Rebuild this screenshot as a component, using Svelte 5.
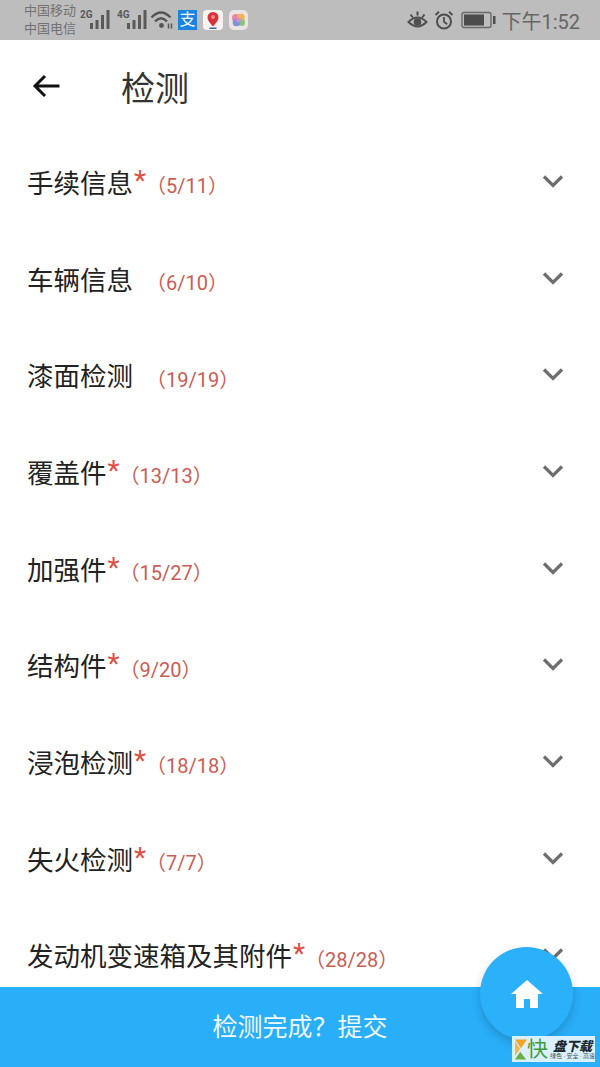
<script>
  const rows = [
    { name: "手续信息", star: true, count: "5/11" },
    { name: "车辆信息", star: false, count: "6/10" },
    { name: "漆面检测", star: false, count: "19/19" },
    { name: "覆盖件", star: true, count: "13/13" },
    { name: "加强件", star: true, count: "15/27" },
    { name: "结构件", star: true, count: "9/20" },
    { name: "浸泡检测", star: true, count: "18/18" },
    { name: "失火检测", star: true, count: "7/7" },
    { name: "发动机变速箱及其附件", star: true, count: "28/28" }
  ];
</script>

{#snippet bars()}
  <svg width="22" height="24" viewBox="0 0 22 24">
    <g fill="#5a5a5a">
      <rect x="1" y="15" width="3" height="6" />
      <rect x="6.500" y="12" width="3" height="9" />
      <rect x="12" y="7" width="3" height="14" />
      <rect x="17.500" y="2" width="3" height="19" />
    </g>
  </svg>
{/snippet}

<div class="page">
  <div class="status">
    <div class="carriers">
      <span>中国移动</span>
      <span>中国电信</span>
    </div>
    <div class="signal">
      <b>2G</b>
      {@render bars()}
    </div>
    <div class="signal second">
      <b>4G</b>
      {@render bars()}
    </div>
    <svg class="wifi" width="24" height="20" viewBox="0 0 24 20">
      <g fill="none" stroke="#555" stroke-width="2.300">
        <path d="M1.500 7.500 Q11 -2.500 20.500 7.500" />
        <path d="M5 11.500 Q11 5 17 11.500" />
      </g>
      <circle cx="11.500" cy="15.500" r="2.400" fill="#555" />
      <path d="M18.500 13.500v5M21.500 13.500v5" stroke="#555" stroke-width="1.500" />
    </svg>
    <div class="app alipay">支</div>
    <svg class="app-svg" width="20" height="20" viewBox="0 0 20 20">
      <rect width="20" height="20" rx="4" fill="#f6f3f0" />
      <path d="M10 2a5.500 5.500 0 0 0-5.500 5.500c0 3.500 5.500 9 5.500 9s5.500-5.500 5.500-9A5.500 5.500 0 0 0 10 2z" fill="#d8333c" />
      <circle cx="10" cy="7" r="2" fill="#eb8c80" />
      <rect x="6.500" y="17.500" width="7" height="1.500" fill="#37699c" />
    </svg>
    <svg class="app-svg pink" width="19" height="20" viewBox="0 0 19 20">
      <rect width="19" height="20" rx="5" fill="#ece3e3" />
      <circle cx="7" cy="8" r="4" fill="#e884a8" />
      <circle cx="12" cy="7.500" r="3.800" fill="#eeb458" />
      <circle cx="12.500" cy="12.500" r="3.500" fill="#8cc67c" />
      <circle cx="7.500" cy="12.500" r="3.800" fill="#7f93dc" />
      <circle cx="9.500" cy="10" r="2.400" fill="#d98fc0" />
    </svg>
    <div class="grow"></div>
    <svg width="21" height="20" viewBox="0 0 21 20">
      <g fill="none" stroke="#4e4e4e" stroke-width="2">
        <path d="M1.500 12 Q10.500 3 19.500 12 Q10.500 21 1.500 12z" />
        <path d="M3.500 4.500l2.400 3M10.500 1.500v4M17.500 4.500l-2.400 3" />
      </g>
      <circle cx="10.500" cy="12" r="3.800" fill="#4e4e4e" />
    </svg>
    <svg class="alarm" width="20" height="20" viewBox="0 0 20 20">
      <circle cx="10" cy="11.500" r="7" fill="none" stroke="#4e4e4e" stroke-width="2" />
      <path d="M10 7v4.700l3.200 2.600" fill="none" stroke="#4e4e4e" stroke-width="1.800" />
      <path d="M1.500 5 L5 1.800M18.500 5 L15 1.800" stroke="#4e4e4e" stroke-width="2" />
    </svg>
    <svg class="battery" width="35" height="18" viewBox="0 0 35 18">
      <rect x="1" y="1.500" width="29" height="15" rx="2" fill="none" stroke="#6a6a6a" stroke-width="1.400" />
      <rect x="3" y="3.500" width="20" height="11" fill="#4c4c4c" />
      <rect x="32" y="5" width="2.500" height="8" fill="#4c4c4c" />
    </svg>
    <span class="time">下午1:52</span>
  </div>

  <header class="bar">
    <svg class="back" width="30" height="26" viewBox="0 0 30 26">
      <path d="M28.500 13H5M14 3L4 13l10 10" fill="none" stroke="#111" stroke-width="3" />
    </svg>
    <h1>检测</h1>
  </header>

  <ul class="list">
    {#each rows as row}
      <li class="row">
        <span class="name">{row.name}</span><span class="star" class:hidden={!row.star}>*</span>
        <span class="count">（{row.count}）</span>
        <svg class="chevron" width="22" height="14" viewBox="0 0 22 14">
          <path d="M2 2.500l9 9 9-9" fill="none" stroke="#6e6e6e" stroke-width="3.200" />
        </svg>
      </li>
    {/each}
  </ul>

  <footer class="submit">检测完成？提交</footer>

  <button class="fab" aria-label="home">
    <svg width="34" height="30" viewBox="0 0 34 30">
      <path d="M17 1L1 15h5v14h8v-9h6v9h8V15h5z" fill="#fff" />
    </svg>
  </button>

  <div class="mark">
    <svg width="15" height="23" viewBox="0 0 15 23">
      <path d="M0 0h14L7 10 0 0z" fill="#f2a427" />
      <path d="M0 2l6 9-6 8z" fill="#f2b84a" />
      <path d="M0 23l6-9 7 9z" fill="#6bae45" />
    </svg>
    <span class="kuai">快</span>
    <div class="mark-text">
      <b>盘下载</b>
      <small>绿色 · 安全 · 高速</small>
    </div>
  </div>
</div>

<style>
  :global(body) {
    margin: 0;
    background: #fff;
  }

  .page {
    position: relative;
    width: 600px;
    height: 1067px;
    overflow: hidden;
    font-family: "Roboto", "Noto Sans CJK SC", sans-serif;
    display: flex;
    flex-direction: column;
  }

  .status {
    height: 40px;
    flex: none;
    background: #bdbdbd;
    display: flex;
    align-items: center;
    padding: 0 20px 0 24px;
    color: #666;
  }

  .carriers {
    display: flex;
    flex-direction: column;
    font-size: 13px;
    line-height: 18px;
    width: 55px;
    color: #727272;
  }

  .signal {
    position: relative;
    width: 32px;
    height: 24px;
    display: flex;
    justify-content: flex-end;
  }

  .second {
    margin-left: 5px;
  }

  .signal b {
    position: absolute;
    left: 1px;
    top: 2px;
    font-size: 10px;
    line-height: 10px;
    color: #5a5a5a;
  }

  .wifi {
    margin-left: 2px;
  }

  .app {
    width: 19px;
    height: 20px;
    margin-left: 4px;
    background: #1b84e0;
    color: #fff;
    font-size: 16px;
    line-height: 20px;
    text-align: center;
  }

  .app-svg {
    margin-left: 6px;
  }

  .pink {
    margin-left: 6px;
  }

  .grow {
    flex: 1;
  }

  .alarm {
    margin-left: 6px;
  }

  .battery {
    margin-left: 7px;
  }

  .time {
    margin-left: 5px;
    font-size: 20px;
    color: #666;
  }

  .bar {
    height: 93px;
    flex: none;
    display: flex;
    align-items: center;
    padding-left: 31px;
  }

  .back {
    display: block;
    margin-bottom: 2px;
  }

  h1 {
    margin: 0 0 0 60px;
    font-size: 34px;
    font-weight: 400;
    color: #333;
  }

  .list {
    list-style: none;
    margin: 0;
    padding: 0;
  }

  .row {
    position: relative;
    height: 96.7px;
    display: flex;
    align-items: center;
    padding: 0 36px 0 27px;
    font-size: 26.500px;
    color: #222;
  }

  .star {
    color: #dd4f45;
    font-size: 28px;
    margin-left: 1px;
    padding-bottom: 2px;
  }

  .hidden {
    visibility: hidden;
  }

  .count {
    font-size: 20px;
    color: #cb5c55;
    padding-top: 7px;
  }

  .chevron {
    margin-left: auto;
    margin-bottom: 1px;
    display: block;
  }

  .submit {
    position: absolute;
    left: 0;
    right: 0;
    bottom: 0;
    height: 80px;
    box-sizing: border-box;
    padding-bottom: 4px;
    background: #29aef8;
    color: #eef8fe;
    font-size: 25px;
    display: flex;
    align-items: center;
    justify-content: center;
  }

  .fab {
    position: absolute;
    left: 480px;
    top: 947px;
    width: 93px;
    height: 93px;
    border: none;
    border-radius: 50%;
    padding: 0;
    background: #2bb0fa;
    box-shadow: 0 4px 10px rgba(0, 0, 0, 0.18);
    display: flex;
    align-items: center;
    justify-content: center;
  }

  .mark {
    position: absolute;
    left: 512px;
    top: 1036px;
    width: 83px;
    height: 26px;
    box-sizing: border-box;
    padding-left: 3px;
    background: rgba(226, 243, 252, 0.96);
    display: flex;
    align-items: center;
    overflow: hidden;
  }

  .kuai {
    color: #3f9c3a;
    font-size: 21px;
    line-height: 26px;
    margin-left: -1px;
  }

  .mark-text {
    display: flex;
    flex-direction: column;
    align-items: center;
    margin-left: 2px;
    line-height: 1;
  }

  .mark-text b {
    font-size: 13px;
    font-style: italic;
    font-weight: 900;
    color: #1d2a33;
  }

  .mark-text small {
    font-size: 6px;
    color: #3a5560;
    white-space: nowrap;
  }
</style>
